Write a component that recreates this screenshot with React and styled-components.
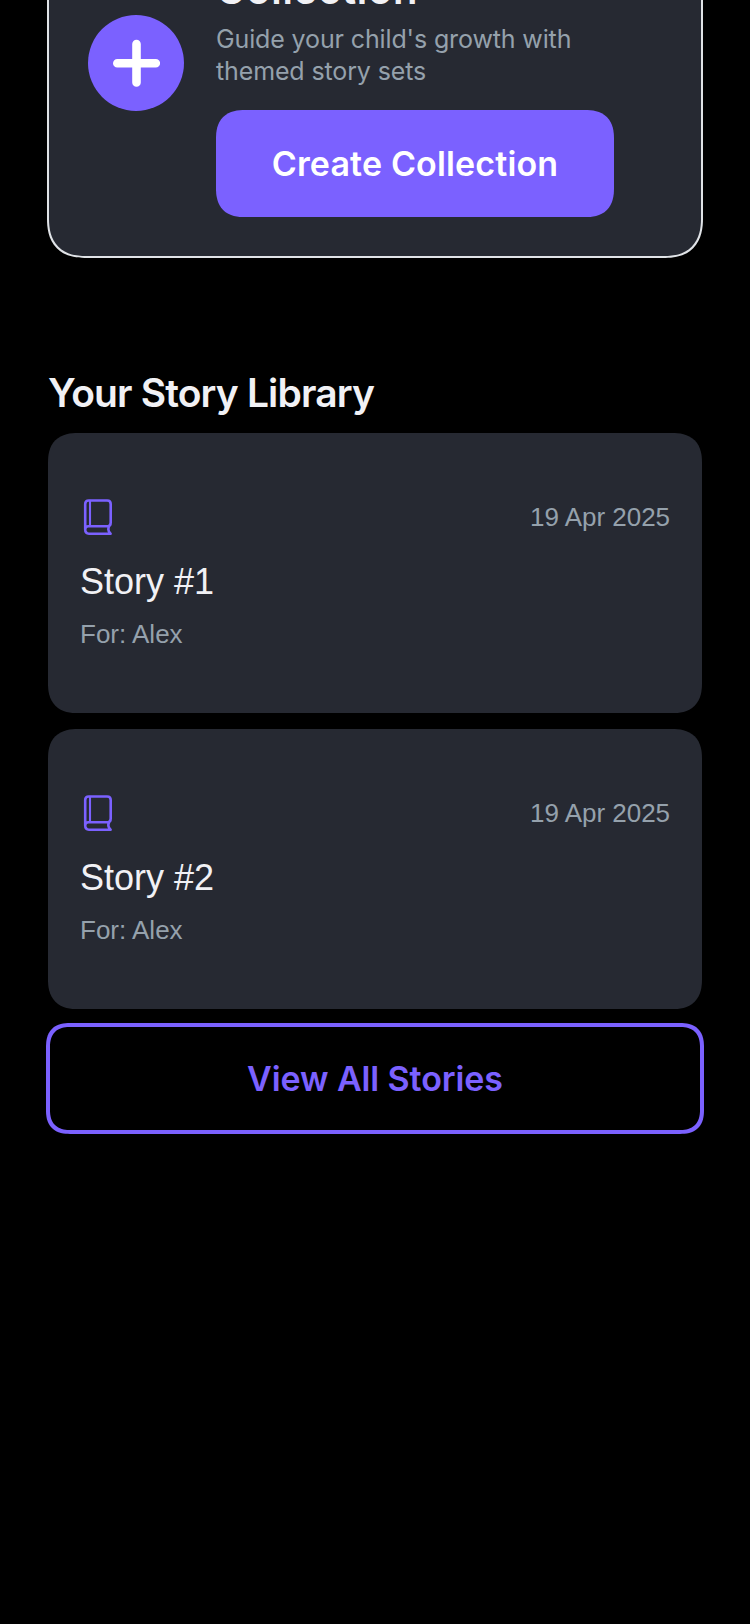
import React from "react";
import styled, { createGlobalStyle, css } from "styled-components";

const Global = createGlobalStyle`
  *, *::before, *::after { box-sizing: border-box; }
  html, body { margin: 0; background: #000; overflow: hidden; }
`;

const ui = `Inter, "Liberation Sans", sans-serif`;
const helvetica = `"Liberation Sans", Arial, sans-serif`;

// Continuous corners where the browser has them, plain rounding otherwise.
const corners = (plain, smooth) => css`
  border-radius: ${plain}px;
  @supports (corner-shape: superellipse(1.3)) {
    border-radius: ${smooth}px;
    corner-shape: superellipse(1.3);
  }
`;

const Screen = styled.main`
  width: 750px;
  height: 1624px;
  overflow: hidden;
  background: #000;
  display: flex;
  flex-direction: column;
  align-items: center;
  font-family: ${ui};
`;

const CollectionCard = styled.section`
  width: 656px;
  height: 362px;
  margin-top: -104px;
  flex: none;
  padding: 0 39px 39px;
  display: flex;
  align-items: flex-end;
  gap: 32px;
  background: #262932;
  border: 2px solid #e0e3e7;
  ${corners(34, 40)}
`;

const AddBadge = styled.div`
  width: 96px;
  height: 96px;
  margin-bottom: 106px;
  flex: none;
  display: grid;
  place-items: center;
  border-radius: 50%;
  background: #7b61ff;
`;

const CollectionBody = styled.div`
  display: flex;
  flex-direction: column;
  align-items: flex-start;
`;

const CollectionTitle = styled.h2`
  margin: 0;
  font-size: 40px;
  line-height: 48px;
  font-weight: 600;
  letter-spacing: 0.7px;
  color: #f1f1f5;
  white-space: nowrap;
`;

const CollectionText = styled.p`
  margin: 9px 0 23px;
  font-size: 25px;
  line-height: 32px;
  letter-spacing: -0.13px;
  color: #95a1ac;
  white-space: nowrap;
`;

const PrimaryButton = styled.button`
  width: 398px;
  height: 107px;
  padding: 0;
  border: 0;
  ${corners(25, 29)}
  background: #7b61ff;
  color: #fff;
  font: 600 34px/44px ${ui};
`;

const Library = styled.section`
  width: 658px;
  margin-top: 111px;
  display: flex;
  flex-direction: column;
  align-items: center;
`;

const LibraryTitle = styled.h2`
  align-self: flex-start;
  margin: 0 0 16px 2px;
  font-size: 39px;
  line-height: 48px;
  font-weight: 600;
  letter-spacing: -0.85px;
  color: #f1f1f5;
`;

const StoryCard = styled.article`
  width: 654px;
  height: 280px;
  margin-bottom: 16px;
  padding: 64px 32px 0;
  ${corners(26, 30)}
  background: #262932;
  font-family: ${helvetica};
`;

const StoryHeader = styled.div`
  height: 40px;
  display: flex;
  align-items: center;
  justify-content: space-between;
`;

const StoryDate = styled.time`
  font-size: 26px;
  line-height: 30px;
  letter-spacing: -0.03px;
  color: #95a1ac;
`;

const StoryTitle = styled.h3`
  margin: 24px 0 0;
  font-size: 36px;
  line-height: 42px;
  font-weight: 400;
  color: #f1f1f5;
`;

const StoryFor = styled.p`
  margin: 16px 0 0;
  font-size: 26px;
  line-height: 30px;
  color: #95a1ac;
`;

const OutlineButton = styled.button`
  width: 658px;
  height: 111px;
  margin-top: -2px;
  padding: 0;
  border: 4px solid #7b61ff;
  ${corners(20, 24)}
  background: #000;
  color: #7b61ff;
  font: 600 34px/44px ${ui};
`;

const ButtonLabel = styled.span`
  letter-spacing: ${(p) => p.$track || 0}px;
`;

const PlusIcon = () => (
  <svg width="48" height="48" viewBox="0 0 48 48" stroke="#fff" strokeWidth="8.6" strokeLinecap="round">
    <path d="M24.5 5v38.5M5.3 24.3h38.5" />
  </svg>
);

const BookIcon = () => (
  <svg width="36" height="40" viewBox="0 0 36 40" fill="none" stroke="#7b61ff" strokeWidth="2.6" strokeLinecap="round" strokeLinejoin="round">
    <path d="M5.2 32.2V7Q5.2 3.5 8.7 3.5H27.2Q30.7 3.5 30.7 7V25.6Q30.7 29.2 27.7 29.2H8.4Q5.2 29.2 5.2 32.6Q5.2 36.7 9 36.7H30.6Q26.8 33.2 29.3 28.9" />
    <path d="M10 3.8V29" strokeWidth="2.1" />
  </svg>
);

const stories = [
  { title: "Story #1", child: "Alex", date: "19 Apr 2025" },
  { title: "Story #2", child: "Alex", date: "19 Apr 2025" },
];

export default function App() {
  return (
    <>
      <Global />
      <Screen>
        <CollectionCard>
          <AddBadge><PlusIcon /></AddBadge>
          <CollectionBody>
            <CollectionTitle>Collection</CollectionTitle>
            <CollectionText>
              Guide your child's growth with
              <br />
              themed story sets
            </CollectionText>
            <PrimaryButton><ButtonLabel $track={0.15}>Create Collection</ButtonLabel></PrimaryButton>
          </CollectionBody>
        </CollectionCard>
        <Library>
          <LibraryTitle>Your Story Library</LibraryTitle>
          {stories.map((s) => (
            <StoryCard key={s.title}>
              <StoryHeader>
                <BookIcon />
                <StoryDate>{s.date}</StoryDate>
              </StoryHeader>
              <StoryTitle>{s.title}</StoryTitle>
              <StoryFor>For: {s.child}</StoryFor>
            </StoryCard>
          ))}
          <OutlineButton><ButtonLabel $track={-0.1}>View All Stories</ButtonLabel></OutlineButton>
        </Library>
      </Screen>
    </>
  );
}
